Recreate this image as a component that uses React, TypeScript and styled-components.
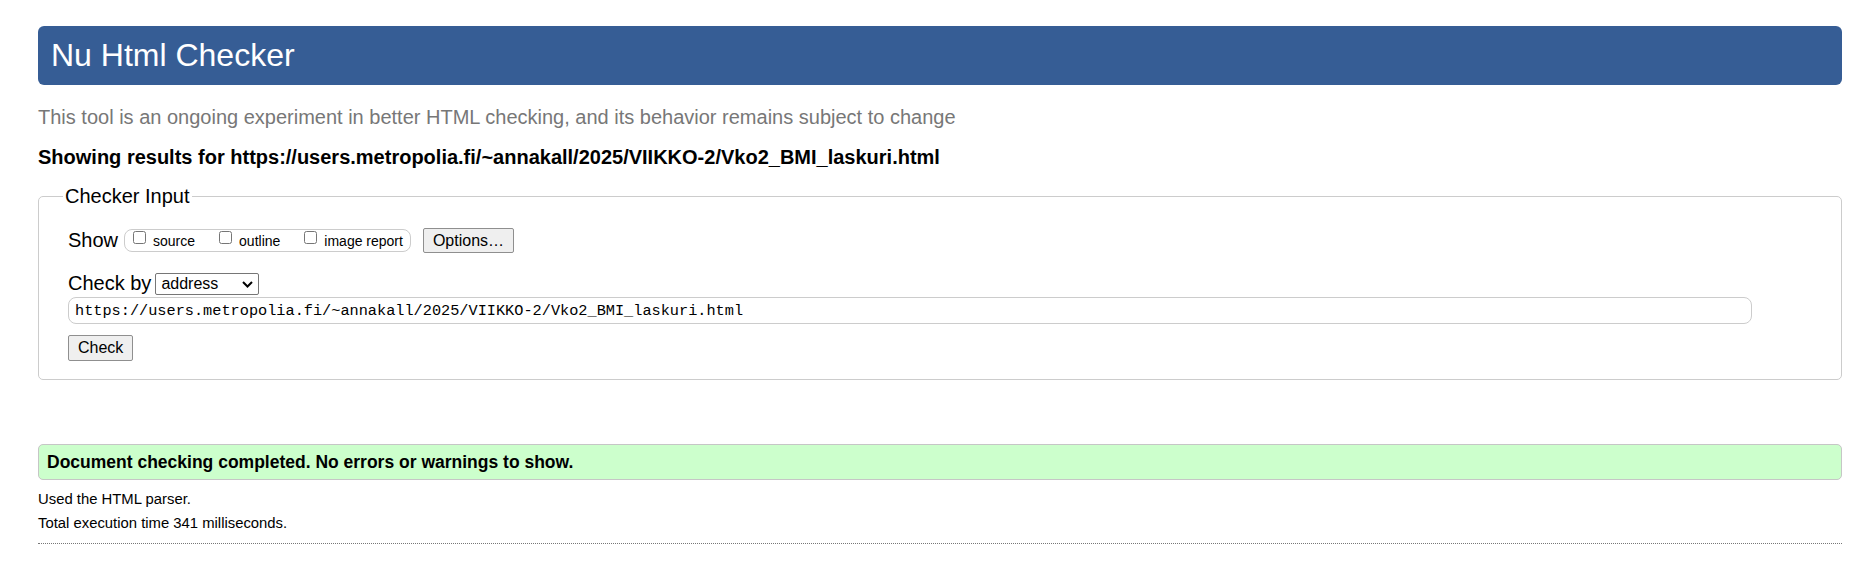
import React from "react";
import styled, { createGlobalStyle } from "styled-components";

const GlobalStyle = createGlobalStyle`
  html, body { margin: 0; padding: 0; background: #fff; }
  body {
    padding: 26px 32px 0 38px;
    font-family: "Liberation Sans", Arial, sans-serif;
    color: #000;
  }
`;

const Page = styled.div`
  display: flex;
  flex-direction: column;
`;

const Header = styled.h1`
  margin: 0;
  height: 59px;
  display: flex;
  align-items: center;
  padding: 0 13px;
  background: #365d95;
  color: #fff;
  border-radius: 6px;
  font-size: 32px;
  line-height: 37px;
  font-weight: normal;
`;

const Subtitle = styled.p`
  margin: 21px 0 0;
  font-size: 20px;
  line-height: 23px;
  color: #777;
`;

const Results = styled.p`
  margin: 17px 0 0;
  font-size: 20px;
  line-height: 23px;
  font-weight: bold;
`;

const Fieldset = styled.fieldset`
  margin: 16px 0 0;
  padding: 20px 29px 18px 29px;
  border: 1px solid #ccc;
  border-radius: 5px;
  min-width: 0;
  display: flex;
  flex-direction: column;
`;

const Legend = styled.legend`
  padding: 0 2px;
  margin-left: -5px;
  font-size: 20px;
  line-height: 23px;
`;

const Row = styled.div<{ $mt?: number }>`
  display: flex;
  align-items: center;
  margin-top: ${(p) => p.$mt ?? 0}px;
`;

const Label = styled.span`
  font-size: 20px;
  line-height: 23px;
`;

const Group = styled.div`
  margin-left: 6px;
  height: 21px;
  display: flex;
  align-items: center;
  padding: 0 7px 0 8px;
  border: 1px solid #ccc;
  border-radius: 8px;
`;

const CheckItem = styled.label<{ $last?: boolean }>`
  display: inline-flex;
  align-items: center;
  gap: 7px;
  margin-right: ${(p) => (p.$last ? 0 : 24)}px;
  font-size: 14px;
  line-height: 16px;
`;

const Box = styled.input`
  width: 13px;
  height: 13px;
  margin: 0 0 7px 0;
`;

const Button = styled.button<{ $ml?: number }>`
  margin-left: ${(p) => p.$ml ?? 0}px;
  height: 25px;
  padding: 0 9px;
  font-family: "Liberation Sans", Arial, sans-serif;
  font-size: 16px;
  color: #000;
  background: #efefef;
  border: 1px solid #8f8f8f;
  border-radius: 2px;
`;

const CheckButton = styled(Button)`
  align-self: flex-start;
  height: 26px;
  margin-top: 11px;
`;

const SelectWrap = styled.span`
  position: relative;
  display: inline-flex;
  margin-left: 4px;
`;

const Select = styled.select`
  appearance: none;
  width: 104px;
  height: 22px;
  padding: 0 0 0 5px;
  font-family: "Liberation Sans", Arial, sans-serif;
  font-size: 16px;
  color: #000;
  background: #fff;
  border: 1px solid #767676;
  border-radius: 2px;
`;

const Chevron = styled.svg`
  position: absolute;
  right: 6px;
  top: 8px;
  pointer-events: none;
`;

const UrlInput = styled.input`
  margin-top: 2px;
  width: 1684px;
  max-width: 100%;
  box-sizing: border-box;
  height: 27px;
  padding: 0 6px;
  font-family: "Liberation Mono", "DejaVu Sans Mono", monospace;
  font-size: 15.25px;
  color: #000;
  border: 1px solid #ccc;
  border-radius: 8px;
  outline: none;
`;

const Success = styled.div`
  margin-top: 64px;
  height: 34px;
  display: flex;
  align-items: center;
  padding: 0 8px;
  background: #ccffcc;
  border: 1px solid #c6c6c6;
  border-radius: 5px;
  font-size: 17.5px;
  font-weight: bold;
`;

const Stats = styled.div`
  margin-top: 11px;
  padding-bottom: 11px;
  border-bottom: 1px dotted #777;
  font-size: 14.85px;
  line-height: 17px;
`;

const StatLine = styled.p<{ $mt?: number }>`
  margin: ${(p) => p.$mt ?? 0}px 0 0;
`;

const url = "https://users.metropolia.fi/~annakall/2025/VIIKKO-2/Vko2_BMI_laskuri.html";

export default function App() {
  return (
    <Page>
      <GlobalStyle />
      <Header>Nu Html Checker</Header>
      <Subtitle>
        This tool is an ongoing experiment in better HTML checking, and its behavior remains subject to change
      </Subtitle>
      <Results>Showing results for {url}</Results>
      <Fieldset>
        <Legend>Checker Input</Legend>
        <Row>
          <Label>Show</Label>
          <Group>
            <CheckItem>
              <Box type="checkbox" />
              source
            </CheckItem>
            <CheckItem>
              <Box type="checkbox" />
              outline
            </CheckItem>
            <CheckItem $last>
              <Box type="checkbox" />
              image report
            </CheckItem>
          </Group>
          <Button $ml={12}>Options…</Button>
        </Row>
        <Row $mt={19}>
          <Label>Check by</Label>
          <SelectWrap>
            <Select defaultValue="address">
              <option value="address">address</option>
              <option value="file">file upload</option>
              <option value="text">text input</option>
            </Select>
            <Chevron width="11" height="7" viewBox="0 0 11 7">
              <path d="M1 1 L5.5 5.5 L10 1" fill="none" stroke="#000" strokeWidth="2" />
            </Chevron>
          </SelectWrap>
        </Row>
        <UrlInput type="url" defaultValue={url} />
        <CheckButton>Check</CheckButton>
      </Fieldset>
      <Success>Document checking completed. No errors or warnings to show.</Success>
      <Stats>
        <StatLine>Used the HTML parser.</StatLine>
        <StatLine $mt={7}>Total execution time 341 milliseconds.</StatLine>
      </Stats>
    </Page>
  );
}
